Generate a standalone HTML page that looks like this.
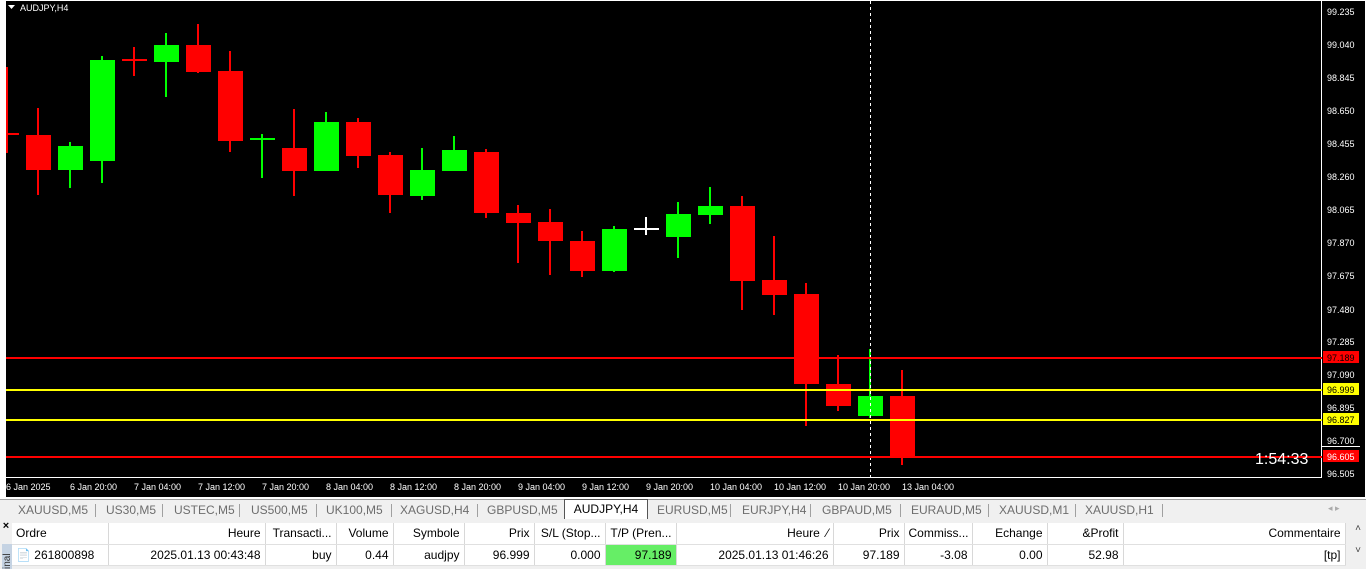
<!DOCTYPE html>
<html><head><meta charset="utf-8"><style>
body{margin:0;width:1366px;height:569px;overflow:hidden;background:#f0f0f0;font-family:"Liberation Sans",sans-serif;position:relative}
.tabs{position:absolute;left:0;top:499px;width:1366px;height:20px;background:#f0f0f0;border-top:1px solid #a0a0a0;font-size:12px;color:#6d6d6d}
.tab{position:absolute;top:3px;}
.sep{position:absolute;top:4px;width:1px;height:13px;background:#a0a0a0}
.act{position:absolute;left:564px;top:-1px;width:82px;height:19px;background:#fff;border:1px solid #555;border-bottom:none;color:#000;text-align:center;line-height:19px}
table{position:absolute;left:12px;top:523px;border-collapse:collapse;font-size:12px;background:#fff;table-layout:fixed;width:1333px}
td{height:21px;padding:0 4px;border-right:1px solid #d8d8d8;border-bottom:1px solid #e0e0e0;text-align:right;white-space:nowrap;overflow:hidden;box-sizing:border-box}
</style></head><body>
<svg width="1366" height="499" style="position:absolute;left:0;top:0" font-family="Liberation Sans" font-size="9">
<rect x="0" y="0" width="1366" height="499" fill="#fff"/>
<rect x="6" y="1" width="1359" height="496" fill="#000"/>
<line x1="1321.5" y1="1" x2="1321.5" y2="477" stroke="#fff"/>
<line x1="6" y1="477.5" x2="1322" y2="477.5" stroke="#fff"/>
<path d="M8 5h7l-3.5 4z" fill="#fff"/>
<text x="20" y="11" fill="#fff">AUDJPY,H4</text>
<g id="c"></g>
<line x1="870.5" y1="1" x2="870.5" y2="477" stroke="#fff" stroke-dasharray="3,3"/>
<g stroke-width="2">
<line x1="6" y1="358" x2="1322" y2="358" stroke="#f00"/>
<line x1="6" y1="390" x2="1322" y2="390" stroke="#ff0"/>
<line x1="6" y1="420" x2="1322" y2="420" stroke="#ff0"/>
<line x1="6" y1="457" x2="1322" y2="457" stroke="#f00"/>
</g>
<text x="1255" y="464" fill="#fff" font-size="16">1:54:33</text>
<g fill="#fff">
<text x="1327" y="15">99.235</text><text x="1327" y="48">99.040</text><text x="1327" y="81">98.845</text><text x="1327" y="114">98.650</text><text x="1327" y="147">98.455</text><text x="1327" y="180">98.260</text><text x="1327" y="213">98.065</text><text x="1327" y="246">97.870</text><text x="1327" y="279">97.675</text><text x="1327" y="313">97.480</text><text x="1327" y="345">97.285</text><text x="1327" y="378">97.090</text><text x="1327" y="411">96.895</text><text x="1327" y="444">96.700</text><text x="1327" y="477">96.505</text>
</g>
<rect x="1323" y="351" width="36" height="12" fill="#f00"/><text x="1327" y="361" fill="#000">97.189</text>
<rect x="1323" y="383" width="36" height="12" fill="#ff0"/><text x="1327" y="393" fill="#000">96.999</text>
<rect x="1323" y="413" width="36" height="12" fill="#ff0"/><text x="1327" y="423" fill="#000">96.827</text>
<rect x="1323" y="450" width="36" height="12" fill="#f00"/><text x="1327" y="460" fill="#fff">96.605</text>
<line x1="1322" y1="446.5" x2="1360" y2="446.5" stroke="#fff"/>
<g fill="#fff">
<text x="6" y="490">6 Jan 2025</text><text x="70" y="490">6 Jan 20:00</text><text x="134" y="490">7 Jan 04:00</text><text x="198" y="490">7 Jan 12:00</text><text x="262" y="490">7 Jan 20:00</text><text x="326" y="490">8 Jan 04:00</text><text x="390" y="490">8 Jan 12:00</text><text x="454" y="490">8 Jan 20:00</text><text x="518" y="490">9 Jan 04:00</text><text x="582" y="490">9 Jan 12:00</text><text x="646" y="490">9 Jan 20:00</text><text x="710" y="490">10 Jan 04:00</text><text x="774" y="490">10 Jan 12:00</text><text x="838" y="490">10 Jan 20:00</text><text x="902" y="490">13 Jan 04:00</text>
</g>
<g>
<line x1="7" y1="67" x2="7" y2="153" stroke="#f00" stroke-width="2"/><line x1="7" y1="134" x2="19" y2="134" stroke="#f00" stroke-width="2"/>
</g>
</svg>
<script>
var d=[[38,'r',108,135,170,195],[70,'g',142,146,170,188],[102,'g',56,60,161,183],[134,'r',47,60,62,76],[166,'g',33,45,62,97],[198,'r',24,45,72,73],[230,'r',51,71,141,152],[262,'g',134,139,141,178],[294,'r',109,148,171,196],[326,'g',112,122,171,171],[358,'r',118,122,156,168],[390,'r',152,155,195,213],[422,'g',148,170,196,200],[454,'g',136,150,171,171],[486,'r',149,152,213,218],[518,'r',205,213,223,263],[550,'r',209,222,241,275],[582,'r',231,241,271,277],[614,'g',226,229,271,272],[646,'w',217,229,231,235],[678,'g',202,214,237,258],[710,'g',187,206,215,224],[742,'r',196,206,281,310],[774,'r',236,280,295,315],[806,'r',283,294,384,426],[838,'r',355,384,406,411],[870,'g',349,396,416,418],[902,'r',370,396,457,465]];
var s='',C={r:'#f00',g:'#0f0',w:'#fff'};
d.forEach(function(a){var c=C[a[1]];s+='<line x1="'+a[0]+'" y1="'+a[2]+'" x2="'+a[0]+'" y2="'+a[5]+'" stroke="'+c+'" stroke-width="2"/>';
var h=a[4]-a[3];if(h<3)s+='<line x1="'+(a[0]-12)+'" y1="'+a[3]+'" x2="'+(a[0]+13)+'" y2="'+a[3]+'" stroke="'+c+'" stroke-width="2"/>';else s+='<rect x="'+(a[0]-12)+'" y="'+a[3]+'" width="25" height="'+h+'" fill="'+c+'"/>';});
document.getElementById('c').innerHTML=s;
</script>
<div class="tabs">
<span class="tab" style="left:18px">XAUUSD,M5</span><div class="sep" style="left:95px"></div>
<span class="tab" style="left:106px">US30,M5</span><div class="sep" style="left:162px"></div>
<span class="tab" style="left:174px">USTEC,M5</span><div class="sep" style="left:239px"></div>
<span class="tab" style="left:251px">US500,M5</span><div class="sep" style="left:316px"></div>
<span class="tab" style="left:326px">UK100,M5</span><div class="sep" style="left:391px"></div>
<span class="tab" style="left:400px">XAGUSD,H4</span><div class="sep" style="left:477px"></div>
<span class="tab" style="left:487px">GBPUSD,M5</span>
<div class="act">AUDJPY,H4</div>
<span class="tab" style="left:657px">EURUSD,M5</span><div class="sep" style="left:730px"></div>
<span class="tab" style="left:742px">EURJPY,H4</span><div class="sep" style="left:810px"></div>
<span class="tab" style="left:822px">GBPAUD,M5</span><div class="sep" style="left:900px"></div>
<span class="tab" style="left:911px">EURAUD,M5</span><div class="sep" style="left:988px"></div>
<span class="tab" style="left:999px">XAUUSD,M1</span><div class="sep" style="left:1075px"></div>
<span class="tab" style="left:1085px">XAUUSD,H1</span><div class="sep" style="left:1162px"></div>
<span class="tab" style="left:1328px;color:#aaa;font-size:9px">◂ ▸</span>
</div>
<div style="position:absolute;left:0;top:520px;width:12px;height:49px;background:#f0f0f0;font-size:11px;font-weight:bold;text-align:center">×</div>
<div style="position:absolute;left:2px;top:544px;width:10px;height:25px;background:#c5d3e3;font-size:10px;color:#333;overflow:hidden;writing-mode:vertical-rl;transform:rotate(180deg)">inal</div>
<table>
<colgroup><col style="width:96px"><col style="width:157px"><col style="width:71px"><col style="width:57px"><col style="width:71px"><col style="width:70px"><col style="width:71px"><col style="width:71px"><col style="width:157px"><col style="width:71px"><col style="width:68px"><col style="width:75px"><col style="width:76px"><col style="width:222px"><col></colgroup>
<tr><td style="text-align:left">Ordre</td><td>Heure</td><td>Transacti...</td><td>Volume</td><td>Symbole</td><td>Prix</td><td>S/L (Stop...</td><td>T/P (Pren...</td><td>Heure &nbsp;⁄</td><td>Prix</td><td>Commiss...</td><td>Echange</td><td>&amp;Profit</td><td>Commentaire</td><td style="border:none"></td></tr>
<tr><td style="text-align:left">📄 261800898</td><td>2025.01.13 00:43:48</td><td>buy</td><td>0.44</td><td>audjpy</td><td>96.999</td><td>0.000</td><td style="background:#66ee66">97.189</td><td>2025.01.13 01:46:26</td><td>97.189</td><td>-3.08</td><td>0.00</td><td>52.98</td><td>[tp]</td><td style="border:none"></td></tr>
</table>
<div style="position:absolute;left:1350px;top:523px;width:16px;height:46px;background:#f0f0f0;font-size:10px;text-align:center;color:#444">˄<br><br>˅</div>
</body></html>
